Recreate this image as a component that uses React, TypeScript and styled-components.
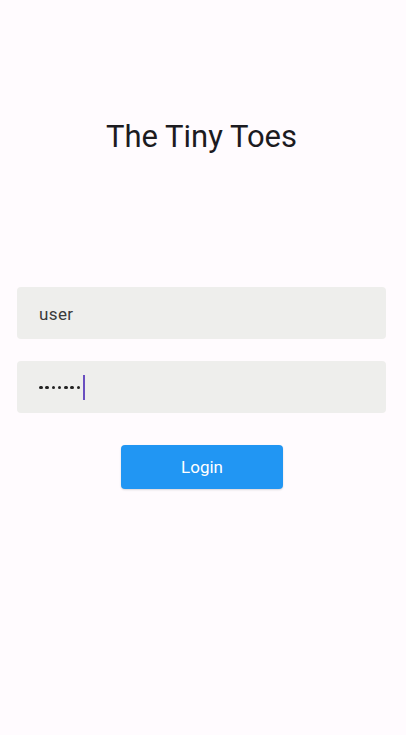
import React from 'react';
import styled, { createGlobalStyle } from 'styled-components';

const GlobalStyle = createGlobalStyle`
  html, body {
    margin: 0;
    padding: 0;
    background: #fffbfe;
    font-family: Roboto, "Liberation Sans", sans-serif;
  }
`;

const Page = styled.div`
  width: 406px;
  height: 735px;
  box-sizing: border-box;
  padding: 0 20px 0 17px;
  display: flex;
  flex-direction: column;
  background: #fffbfe;
`;

const Title = styled.h1`
  margin: 117px 0 0;
  height: 40px;
  line-height: 40px;
  text-align: center;
  font-size: 31px;
  font-weight: 400;
  color: #1c1b1f;
`;

const Form = styled.div`
  margin-top: 130px;
  display: flex;
  flex-direction: column;
  gap: 22px;
`;

const Field = styled.div`
  height: 52px;
  border-radius: 4px;
  background: #eeeeec;
  display: flex;
  align-items: center;
  padding: 1px 22px 0;
  box-sizing: border-box;
  font-size: 17px;
  color: #3a3a3a;
  letter-spacing: 0.4px;
`;

const Dots = styled.span`
  display: flex;
  gap: 2.8px;
`;

const Dot = styled.span`
  width: 3.5px;
  height: 3.5px;
  border-radius: 50%;
  background: #222;
`;

const Caret = styled.span`
  display: inline-block;
  width: 2px;
  height: 25px;
  background: #6a4fc0;
  margin-left: 3px;
`;

const Actions = styled.div`
  display: flex;
  justify-content: center;
  margin-top: 32px;
`;

const LoginButton = styled.button`
  width: 162px;
  height: 44px;
  border: none;
  border-radius: 4px;
  background: #2196f3;
  color: #ffffff;
  font-family: Roboto, "Liberation Sans", sans-serif;
  font-size: 17px;
  box-shadow: 0 1px 2px rgba(0, 0, 0, 0.15);
  margin-left: 1px;
`;

export default function App() {
  const hidden = 'passwd!';
  return (
    <>
      <GlobalStyle />
      <Page>
        <Title>The Tiny Toes</Title>
        <Form>
          <Field>user</Field>
          <Field>
            <Dots>
              {hidden.split('').map((_, i) => (
                <Dot key={i} />
              ))}
            </Dots>
            <Caret />
          </Field>
        </Form>
        <Actions>
          <LoginButton>Login</LoginButton>
        </Actions>
      </Page>
    </>
  );
}
